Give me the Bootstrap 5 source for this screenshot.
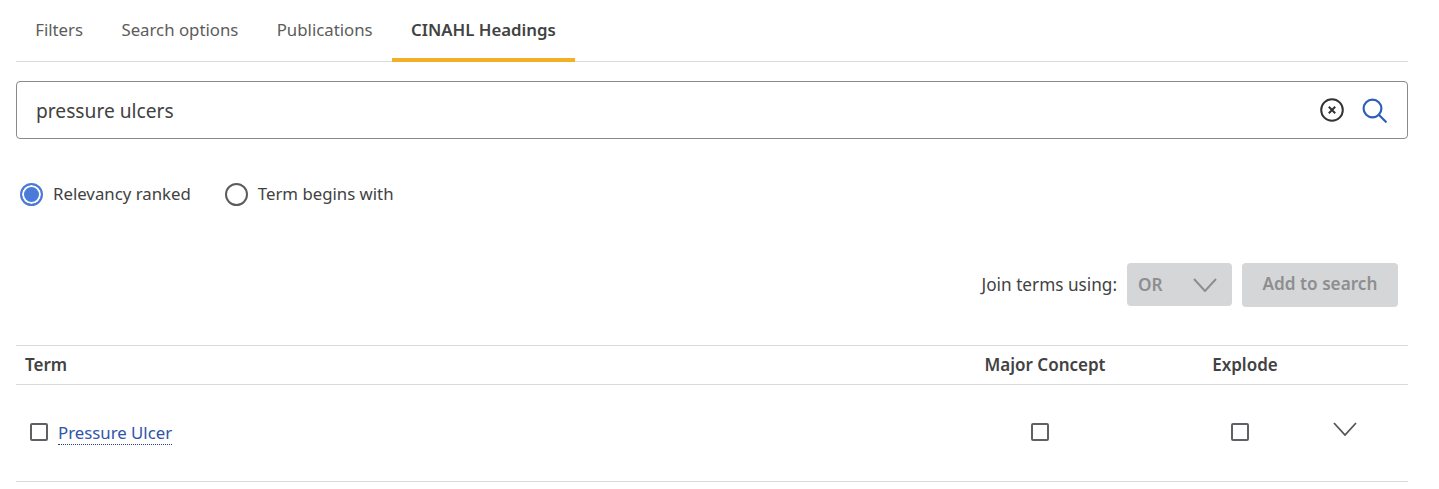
<!DOCTYPE html>
<html lang="en">
<head>
    <meta charset="UTF-8">
    <meta name="viewport" content="width=device-width, initial-scale=1.0">
    <title>CINAHL Headings</title>
    <link href="https://cdn.jsdelivr.net/npm/bootstrap@5.3.0/dist/css/bootstrap.min.css" rel="stylesheet">
    <style>
        body { font-family: "Noto Sans", sans-serif; color: #424242; font-size: 16.8px; background: #fff; overflow: hidden; }
        .page-wrap { padding: 0 31px 0 16px; }
        .tab-bar { border-bottom: 1px solid #d9d9d9; height: 62px; }
        .tab-bar .nav-link { color: #5c5c5c; padding: 19px 19.2px 0; height: 62px; line-height: 22px; border-bottom: 4px solid transparent; font-size: 16.8px; }
        .tab-bar .nav-link.active { color: #424242; font-weight: 600; border-bottom-color: #f2b124; }
        .term-search { height: 58px; margin-top: 19px; border: 1px solid #8a8a8a; border-radius: 4px; padding: 0 20px 0 19px; }
        .term-search input { border: 0; outline: 0; flex: 1; font-size: 19.2px; color: #424242; font-family: inherit; padding: 2px 0 0; }
        .icon-btn { background: none; border: 0; padding: 0; line-height: 0; }
        .clear-btn { margin-right: 18px; }
        .rank-row { margin-top: 43px; height: 24px; padding-left: 4px; gap: 34px; }
        .rank-opt { gap: 10px; line-height: 24px; }
        .radio-dot { width: 23px; height: 23px; border-radius: 50%; border: 2px solid #5c5c5c; display: block; background: #fff; }
        .radio-dot.on { border-color: #4a7bd8; box-shadow: inset 0 0 0 2px #fff; background: #4a7bd8; }
        .join-row { margin-top: 57px; padding-right: 10px; gap: 10px; }
        .join-label { margin-top: 9px; font-size: 17.2px; }
        .btn-off { background: #d5d6d8; color: #8d8e90; font-weight: 600; border: 0; border-radius: 4px; font-size: 17.2px; font-family: inherit; opacity: 1; }
        .or-btn { width: 105px; height: 43px; padding: 0 15px 0 11px; }
        .add-btn { width: 156px; height: 44px; padding: 0 0 2px; }
        .term-table { margin: 38px 0 0; table-layout: fixed; border-top: 1px solid #d9d9d9; color: #424242; }
        .term-table th { font-weight: 600; height: 39px; padding: 0 9px; vertical-align: middle; border-bottom: 1px solid #d9d9d9; font-size: 17px; color: #424242; }
        .term-table th.col-major, .term-table th.col-explode { padding-left: 19px; padding-right: 9px; }
        .term-table td { height: 97px; padding: 0 0 2px; vertical-align: middle; border-bottom: 1px solid #d9d9d9; color: #424242; }
        .box-check { width: 18px; height: 18px; border: 2px solid #5f6063; border-radius: 2px; display: block; }
        .term-row-check { margin: 0 10px 0 14px; }
        .term-link { color: #2f55a8; text-decoration: none; border-bottom: 1px dotted #1f3f8f; line-height: 22px; display: inline-block; margin-top: 2px; }
        .more-chevron { display: block; margin: 0 0 6px -7px; }
        .col-major, .col-explode { width: 200px; }
        .col-more { width: 68px; }
    </style>
</head>
<body>
    <div class="page-wrap">
        <ul class="nav tab-bar">
            <li class="nav-item"><a class="nav-link" href="#">Filters</a></li>
            <li class="nav-item"><a class="nav-link" href="#">Search options</a></li>
            <li class="nav-item"><a class="nav-link" href="#">Publications</a></li>
            <li class="nav-item"><a class="nav-link active" href="#">CINAHL Headings</a></li>
        </ul>

        <div class="term-search d-flex align-items-center">
            <input type="text" value="pressure ulcers" aria-label="Search terms">
            <button class="icon-btn clear-btn" type="button" aria-label="Clear">
                <svg width="24" height="24" viewBox="0 0 24 24" fill="none" stroke="#333" stroke-width="2"><circle cx="12" cy="12" r="10.8"/><path d="M8.8 8.8l6.4 6.4M15.2 8.8l-6.4 6.4"/></svg>
            </button>
            <button class="icon-btn" type="button" aria-label="Search">
                <svg width="25" height="25" viewBox="0 0 25 25" fill="none" stroke="#2f5fb8" stroke-width="2.2"><circle cx="10.5" cy="10.5" r="8.9"/><path d="M16.8 16.8l7 7" stroke-linecap="round"/></svg>
            </button>
        </div>

        <div class="rank-row d-flex align-items-center">
            <div class="rank-opt d-flex align-items-center"><span class="radio-dot on"></span>Relevancy ranked</div>
            <div class="rank-opt d-flex align-items-center"><span class="radio-dot"></span>Term begins with</div>
        </div>

        <div class="join-row d-flex justify-content-end align-items-start">
            <span class="join-label">Join terms using:</span>
            <button class="btn-off or-btn d-flex align-items-center justify-content-between" type="button" disabled>OR
                <svg width="24" height="14" viewBox="0 0 24 14" fill="none" stroke="#8d8e90" stroke-width="2"><path d="M1 1l11 12L23 1"/></svg>
            </button>
            <button class="btn-off add-btn" type="button" disabled>Add to search</button>
        </div>

        <table class="table term-table">
            <thead>
                <tr>
                    <th>Term</th>
                    <th class="col-major text-center">Major Concept</th>
                    <th class="col-explode text-center">Explode</th>
                    <th class="col-more"></th>
                </tr>
            </thead>
            <tbody>
                <tr>
                    <td>
                        <div class="d-flex align-items-center">
                            <span class="box-check term-row-check"></span>
                            <a class="term-link" href="#">Pressure Ulcer</a>
                        </div>
                    </td>
                    <td><span class="box-check mx-auto"></span></td>
                    <td><span class="box-check mx-auto"></span></td>
                    <td>
                        <svg width="24" height="14" viewBox="0 0 24 14" fill="none" stroke="#555" stroke-width="1.8" class="more-chevron"><path d="M1 1l11 12L23 1"/></svg>
                    </td>
                </tr>
            </tbody>
        </table>
    </div>
    <script src="https://cdn.jsdelivr.net/npm/bootstrap@5.3.0/dist/js/bootstrap.bundle.min.js"></script>
</body>
</html>
